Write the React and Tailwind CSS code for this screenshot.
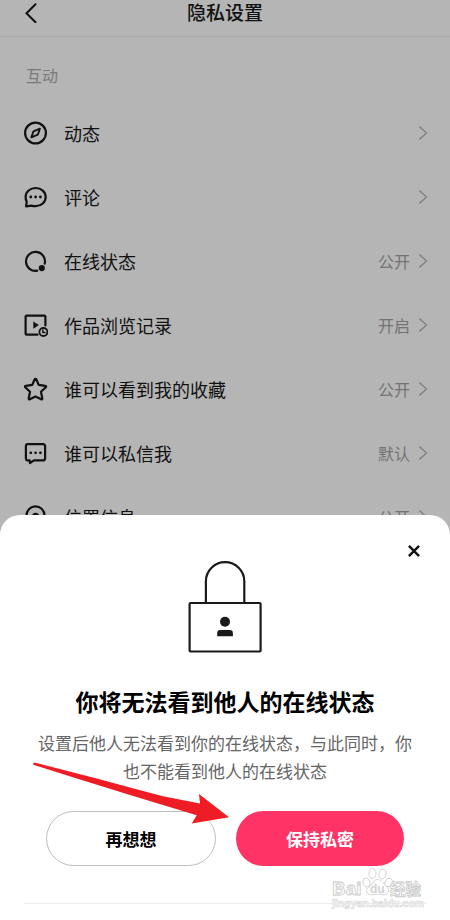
import React, { useState } from "react";

function Icon({ children }) {
  return (
    <svg
      viewBox="0 0 24 24"
      className="w-6 h-6 shrink-0"
      fill="none"
      stroke="currentColor"
      strokeWidth="2.2"
      strokeLinecap="round"
      strokeLinejoin="round"
      aria-hidden="true"
    >
      {children}
    </svg>
  );
}

const CompassIcon = () => (
  <Icon>
    <circle cx="11.5" cy="12" r="10.4" />
    <path strokeWidth="1.9" d="M15.9 7.7 9.5 10.3 7.4 16.3 13.8 13.7Z" />
  </Icon>
);

const CommentIcon = () => (
  <Icon>
    <path d="M2.1 21.4 2.7 16.6A9.3 9.3 0 0 1 1.6 12C1.6 6.6 6.2 3 11.7 3s10 3.900 10 9-4.400 9.200-10 9.200a12 12 0 0 1-4.200-.6Z" />
    <Dots y={12} />
  </Icon>
);

const OnlineIcon = () => (
  <Icon>
    <path d="M13.2 21.7A9.5 9.5 0 1 1 20.7 14.6" />
    <circle cx="17.8" cy="19.1" r="3.1" fill="currentColor" stroke="none" />
  </Icon>
);

const HistoryIcon = () => (
  <Icon>
    <path d="M13.5 21.7H2.5a.9.9 0 0 1-.9-.9V3.6a.9.9 0 0 1 .9-.9h18a.9.9 0 0 1 .9.9v8.800" />
    <path d="M9.3 8.4v7.4l5.6-3.7Z" fill="currentColor" stroke="none" />
    <circle cx="19.4" cy="19" r="4" strokeWidth="1.8" />
    <path strokeWidth="1.5" d="M18.9 17.2v2.2h2" />
  </Icon>
);

const StarIcon = () => (
  <Icon>
    <path d="M10.7 2.3a.9.9 0 0 1 1.6 0L14.7 7.9l6.600.9a.8.8 0 0 1 .5 1.4l-4.8 4.5 1.3 6.800a.8.8 0 0 1-1.2.8L11.5 19.5l-5.6 2.800a.8.8 0 0 1-1.2-.8L6 14.7 1.2 10.2a.8.8 0 0 1 .5-1.4l6.600-.9Z" />
  </Icon>
);

const MessageIcon = () => (
  <Icon>
    <path d="M3.7 3.2h15.6a1.8 1.8 0 0 1 1.8 1.8v12.6a1.8 1.8 0 0 1-1.8 1.8H10L5.9 22 5.7 19.4h-2a1.8 1.8 0 0 1-1.8-1.8V5a1.8 1.8 0 0 1 1.8-1.8Z" />
    <Dots y={11.8} />
  </Icon>
);

const PinIcon = () => (
  <Icon>
    <path d="M11.5 22.8C6.5 18.5 2.5 14.5 2.5 10.3a9 9 0 0 1 18 0c0 4.200-4 8.200-9 12.500Z" />
    <circle cx="11.5" cy="11.3" r="2.5" />
  </Icon>
);

function Dots({ y }) {
  return (
    <g fill="currentColor" stroke="none">
      <circle cx="6.8" cy={y} r="1.4" />
      <circle cx="11.6" cy={y} r="1.4" />
      <circle cx="16.4" cy={y} r="1.4" />
    </g>
  );
}

const ITEMS = [
  { label: "动态", icon: CompassIcon },
  { label: "评论", icon: CommentIcon },
  { label: "在线状态", icon: OnlineIcon, value: "公开" },
  { label: "作品浏览记录", icon: HistoryIcon, value: "开启" },
  { label: "谁可以看到我的收藏", icon: StarIcon, value: "公开" },
  { label: "谁可以私信我", icon: MessageIcon, value: "默认" },
  { label: "位置信息", icon: PinIcon, value: "公开" },
];

function SettingRow({ item }) {
  const RowIcon = item.icon;
  return (
    <li>
      <a href="#" className="flex items-center h-16 pl-6 pr-[22px]">
        <RowIcon />
        <span className="ml-4 pb-px flex-1 text-[18px] leading-6">{item.label}</span>
        {item.value && (
          <span className="pb-px text-base text-[#a3a3a3]">{item.value}</span>
        )}
        <svg
          viewBox="0 0 10 16"
          className="w-[10px] h-4 ml-2 text-[#c0c0c0]"
          fill="none"
          stroke="currentColor"
          strokeWidth="1.7"
          aria-hidden="true"
        >
          <path d="M1.2 1.3 8.4 8l-7.2 6.7" />
        </svg>
      </a>
    </li>
  );
}

function LockPicture() {
  return (
    <svg
      viewBox="0 0 74 93"
      className="w-[74px] h-[93px] mx-auto"
      fill="none"
      stroke="#1a1a1a"
      strokeWidth="2.2"
      aria-hidden="true"
    >
      <path d="M17.9 42.5V21.3a19.2 19.2 0 0 1 38.4 0v21.2" />
      <rect x="1.6" y="43" width="71" height="48.5" rx="1" />
      <circle cx="37" cy="61.8" r="5" fill="#1a1a1a" stroke="none" />
      <path d="M29.2 76.3v-3.3a3 3 0 0 1 3-3h9.7a3 3 0 0 1 3 3v3.3Z" fill="#1a1a1a" stroke="none" />
    </svg>
  );
}

function Arrow() {
  return (
    <svg
      viewBox="0 0 198 64"
      className="absolute left-8 top-[247px] w-[198px] h-16 pointer-events-none"
      aria-hidden="true"
    >
      <path
        d="M2.5 .4Q.6 .8 1.3 2.7L48 17.5 98 33 164.7 53.3 159.7 61.5 197 55.3 167 32 168 41.6 131 34.3 98 25.6 64.7 16.6Z"
        fill="#ee1c25"
      />
    </svg>
  );
}

function Watermark() {
  return (
    <svg
      viewBox="0 0 100 46"
      className="absolute right-5 bottom-[7px] w-[100px] h-[46px] pointer-events-none"
      fill="#fff"
      stroke="#c9c9c9"
      strokeWidth="0.8"
      fontFamily="'Liberation Sans', 'Noto Sans CJK SC', sans-serif"
      fontWeight="700"
    >
      <text x="2" y="28" fontSize="19">Bai</text>
      <ellipse cx="36.5" cy="15.5" rx="3.4" ry="4.4" transform="rotate(-15 36.5 15.5)" />
      <ellipse cx="42.5" cy="6.5" rx="3.6" ry="5" />
      <ellipse cx="52.5" cy="7" rx="3.6" ry="5" transform="rotate(10 52.5 7)" />
      <ellipse cx="58.5" cy="15.5" rx="3.4" ry="4.4" transform="rotate(25 58.5 15.5)" />
      <path d="M47.5 12.5c4 0 5.5 3.500 8 6 2 2 3.500 3 3 5.500-.6 3.500-3.500 4-6.500 3.600-3-.5-6-.5-9 0-3.500.5-6.300-.5-6.500-4-.1-2.500 2.500-3.700 4.500-5.500 2.200-2 3-5.600 6.500-5.600Z" />
      <text x="40" y="26" fontSize="12" fill="#d2d2d2" stroke="none">du</text>
      <text x="60" y="28" fontSize="15.5">经验</text>
      <text x="2" y="40" fontSize="10.5" strokeWidth="0.6" stroke="#d6d6d6">jingyan.baidu.com</text>
    </svg>
  );
}

function PrivacySheet({ onClose }) {
  return (
    <section
      role="dialog"
      aria-labelledby="sheet-title"
      className="fixed inset-x-0 bottom-0 bg-white rounded-t-[20px] pt-[45px] pb-4 text-center"
    >
      <button
        type="button"
        aria-label="关闭"
        onClick={onClose}
        className="absolute top-6 right-6 w-6 h-6 flex items-center justify-center"
      >
        <svg viewBox="0 0 12 12" className="w-3 h-3" stroke="#111" strokeWidth="2.4">
          <path d="M.9 .9 11.1 11.1M11.1 .9 .9 11.1" />
        </svg>
      </button>

      <LockPicture />

      <h2 id="sheet-title" className="mt-8 text-[23px] leading-8 font-bold text-black">
        你将无法看到他人的在线状态
      </h2>
      <p className="mt-3 px-9 text-[17px] leading-7 text-[#666]">
        设置后他人无法看到你的在线状态，与此同时，你也不能看到他人的在线状态
      </p>

      <div className="mt-[26px] px-[46px] flex gap-5 text-[17px] font-bold">
        <button
          type="button"
          onClick={onClose}
          className="flex-1 h-[55px] rounded-full border border-[#bdbdbd] text-black"
        >
          再想想
        </button>
        <button
          type="button"
          onClick={onClose}
          className="flex-1 h-[55px] rounded-full bg-[#ff3366] text-white"
        >
          保持私密
        </button>
      </div>

      <div className="mt-[37px] mx-6 h-px bg-[#ececec]" />

      <Arrow />
      <Watermark />
    </section>
  );
}

export default function App() {
  const [open, setOpen] = useState(true);

  return (
    <div className="min-h-screen bg-white text-[#181818] font-['Noto_Sans_CJK_SC',sans-serif]">
      <header className="relative pb-3 border-b border-[#ececec]">
        <button type="button" aria-label="返回" className="absolute left-6 top-[3px]">
          <svg
            viewBox="0 0 14 20"
            className="w-[14px] h-5"
            fill="none"
            stroke="currentColor"
            strokeWidth="2"
            strokeLinecap="round"
          >
            <path d="M11.5 1.3 2.5 10.3l9 9" />
          </svg>
        </button>
        <h1 className="text-[19px] leading-6 text-center font-medium">隐私设置</h1>
      </header>

      <main>
        <h2 className="pt-[26px] pb-[14px] px-[26px] text-base leading-6 text-[#adadad]">
          互动
        </h2>
        <ul>
          {ITEMS.map((item) => (
            <SettingRow key={item.label} item={item} />
          ))}
        </ul>
      </main>

      {open && (
        <>
          <div className="fixed inset-0 bg-black/29" />
          <PrivacySheet onClose={() => setOpen(false)} />
        </>
      )}
    </div>
  );
}
